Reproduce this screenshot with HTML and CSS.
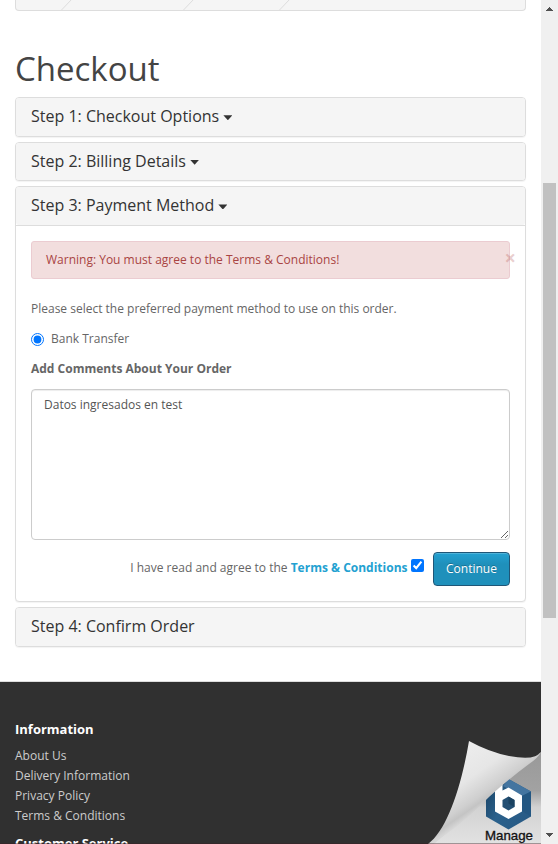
FILE: index.html
```html
<!DOCTYPE html>
<html lang="en">
<head>
<meta charset="utf-8">
<title>Checkout</title>
<link rel="stylesheet" href="styles.css">
</head>
<body>
<div class="viewport">
  <div class="page">
    <main class="container">
      <div class="breadcrumb">
        <svg width="509" height="10" viewBox="0 0 509 10" fill="none" stroke="#ddd"><path d="M45.5 10l10.5-11M167.500 10l10.500-11M263.500 10l10.500-11"/></svg>
      </div>
      <h1>Checkout</h1>
      <section class="panel"><h4 class="panel-heading">Step 1: Checkout Options <i class="caret"></i></h4></section>
      <section class="panel"><h4 class="panel-heading">Step 2: Billing Details <i class="caret"></i></h4></section>
      <section class="panel">
        <h4 class="panel-heading">Step 3: Payment Method <i class="caret"></i></h4>
        <div class="panel-body">
          <div class="alert">Warning: You must agree to the Terms &amp; Conditions!<span class="close">×</span></div>
          <p>Please select the preferred payment method to use on this order.</p>
          <label class="radio"><input type="radio" checked>Bank Transfer</label>
          <p><strong>Add Comments About Your Order</strong></p>
          <textarea>Datos ingresados en test</textarea>
          <div class="buttons">
            <span>I have read and agree to the <a href="#">Terms &amp; Conditions</a></span>
            <input type="checkbox" checked>
            <button class="btn">Continue</button>
          </div>
        </div>
      </section>
      <section class="panel"><h4 class="panel-heading">Step 4: Confirm Order</h4></section>
    </main>
    <footer>
      <h5>Information</h5>
      <ul>
        <li>About Us</li>
        <li>Delivery Information</li>
        <li>Privacy Policy</li>
        <li>Terms &amp; Conditions</li>
      </ul>
      <h5>Customer Service</h5>
    </footer>
    <svg class="curl" width="114" height="104" viewBox="0 0 114 104">
      <defs>
        <linearGradient id="under" x1="0" y1="0" x2="0" y2="1">
          <stop offset="0" stop-color="#999"/><stop offset=".42" stop-color="#a2a2a2"/><stop offset=".6" stop-color="#d2d2d2"/><stop offset="1" stop-color="#e2e2e2"/>
        </linearGradient>
        <linearGradient id="flap" gradientUnits="userSpaceOnUse" x1="40" y1="8" x2="73" y2="56">
          <stop offset="0" stop-color="#ececec"/><stop offset=".45" stop-color="#e6e6e6"/><stop offset=".8" stop-color="#cfcfcf"/><stop offset=".9" stop-color="#c4c4c4"/><stop offset="1" stop-color="#d6d6d6"/>
        </linearGradient>
        <linearGradient id="blue" x1="0" y1="0" x2="1" y2=".6">
          <stop offset="0" stop-color="#173f60"/><stop offset=".5" stop-color="#2b618c"/><stop offset="1" stop-color="#285b86"/>
        </linearGradient>
      </defs>
      <path fill="url(#under)" d="M114 12L70 48L2 104H114z"/>
      <path fill="url(#blue)" d="M81.500 39L104 51.500V76.500L81.500 89.500L59 76.500V51.500z"/>
      <path fill="#4475a0" d="M81.500 39L104 51.500L95 56L76 46z"/>
      <path fill="#245782" d="M104 51.500V76.500L95 71V56z"/>
      <path fill="#fff" d="M68 42h7.500v8.500l6-3L95 55.500v16L81.500 79L68 71.500z"/>
      <path fill="#234f73" d="M81.500 56.500L87.500 60v7L81.500 70.500L75.500 67v-7z"/>
      <path fill="#1a4261" d="M81.500 56.500L87.500 60v7L81.500 63.500z"/>
      <path fill="url(#flap)" d="M42 1Q62 12 82 16Q108 21 114 12Q111 18 102 24Q83 38 62 57Q40 79 26 89Q12 99 7 104H1C20 90 34 48 42 1z"/>
      <text x="58" y="100" textLength="48" lengthAdjust="spacingAndGlyphs">Manage</text>
    </svg>
    <div class="bottom-line"></div>
  </div>
  <div class="scrollbar">
    <svg width="17" height="17"><path fill="#505050" d="M5 11V10h1V9h1V8h1V7h1v1h1v1h1v1h1v1z"/></svg>
    <div class="thumb"></div>
    <svg width="17" height="17"><path fill="#505050" d="M5 6v1h1v1h1v1h1v1h1V9h1V8h1V7h1V6z"/></svg>
  </div>
</div>
</body>
</html>
```
FILE: styles.css
```css
* { box-sizing: border-box; }
body { margin: 0; font: 400 12px/20px "Open Sans", sans-serif; color: #666; background: #fff; }
.viewport { display: flex; height: 844px; overflow: hidden; }
.page { width: 541px; height: 844px; overflow: hidden; position: relative; }
.container { padding: 0 15px; height: 681px; }
.breadcrumb { height: 11px; border: 1px solid #ddd; border-top: 0; border-radius: 0 0 4px 4px; background: #f5f5f5; }
.breadcrumb svg { display: block; }
h1 { margin: 40px 0 10.2px; font-size: 33px; line-height: 36px; font-weight: 400; color: #444; }
.panel { margin-bottom: 5px; border: 1px solid #ddd; border-radius: 4px; background: #fff; box-shadow: 0 1px 1px rgba(0,0,0,.05); }
.panel-heading { margin: 0; padding: 10px 15px; font-size: 16px; line-height: 17.6px; font-weight: 400; color: #333; background: #f5f5f5; border-radius: 3px; }
.caret { display: inline-block; width: 9px; height: 5px; background: #333; clip-path: polygon(0 0, 100% 0, 50% 100%); vertical-align: 2px; }
.panel-body { padding: 15px; border-top: 1px solid #ddd; }
.alert { height: 38px; padding: 8px 14px; border: 1px solid #ebccd1; border-radius: 3px; background: #f2dede; color: #a94442; margin-bottom: 20px; display: flex; justify-content: space-between; }
.close { font-size: 20px; font-weight: 700; line-height: 16px; color: #a94442; opacity: .25; margin-right: -21px; }
p { margin: 0 0 10px; }
input { accent-color: #0075ff; }
.radio { display: flex; align-items: center; margin-bottom: 10px; }
.radio input { margin: 1px 7px 0 0; width: 13px; height: 13px; }
textarea { display: block; width: 100%; height: 151px; padding: 5px 12px; border: 1px solid #ccc; border-radius: 4px; font: inherit; color: #555; box-shadow: inset 0 1px 1px rgba(0,0,0,.075); resize: both; margin: 0; }
.buttons { display: flex; justify-content: flex-end; padding-top: 12px; height: 46px; }
.buttons span { padding-top: 6px; }
.buttons a { color: #23a1d1; font-weight: 700; text-decoration: none; }
.buttons input { width: 13px; height: 13px; margin: 7px 9px 0 3.5px; }
.btn { width: 77px; height: 34px; padding: 0; border: 1px solid #1f5677; border-radius: 4px; background: linear-gradient(#23a1d1, #1f90bb 35%); color: #fff; font: inherit; text-shadow: 0 -1px 0 rgba(0,0,0,.25); box-shadow: inset 0 1px 0 rgba(255,255,255,.2); }
footer { height: 163px; padding: 37px 15px 0; border-top: 1px solid #ddd; background: #303030; color: #ccc; }
h5 { margin: 0 0 7px; font-size: 13px; line-height: 20px; font-weight: 700; color: #fff; }
ul { margin: 0 0 7px; padding: 0; list-style: none; }
.curl { position: absolute; right: 0; bottom: 0; }
.curl text { font: 13px "Liberation Sans", sans-serif; fill: #111; stroke: #111; stroke-width: .3px; }
.bottom-line { position: absolute; left: 0; right: 0; bottom: 0; height: 1px; background: rgba(60,30,35,.4); }
.scrollbar { width: 17px; height: 844px; background: #f0f0f0; display: flex; flex-direction: column; align-items: center; justify-content: space-between; }
.thumb { width: 13px; height: 435px; margin: 165px 0 209px; background: #c1c1c1; flex: none; }
```
